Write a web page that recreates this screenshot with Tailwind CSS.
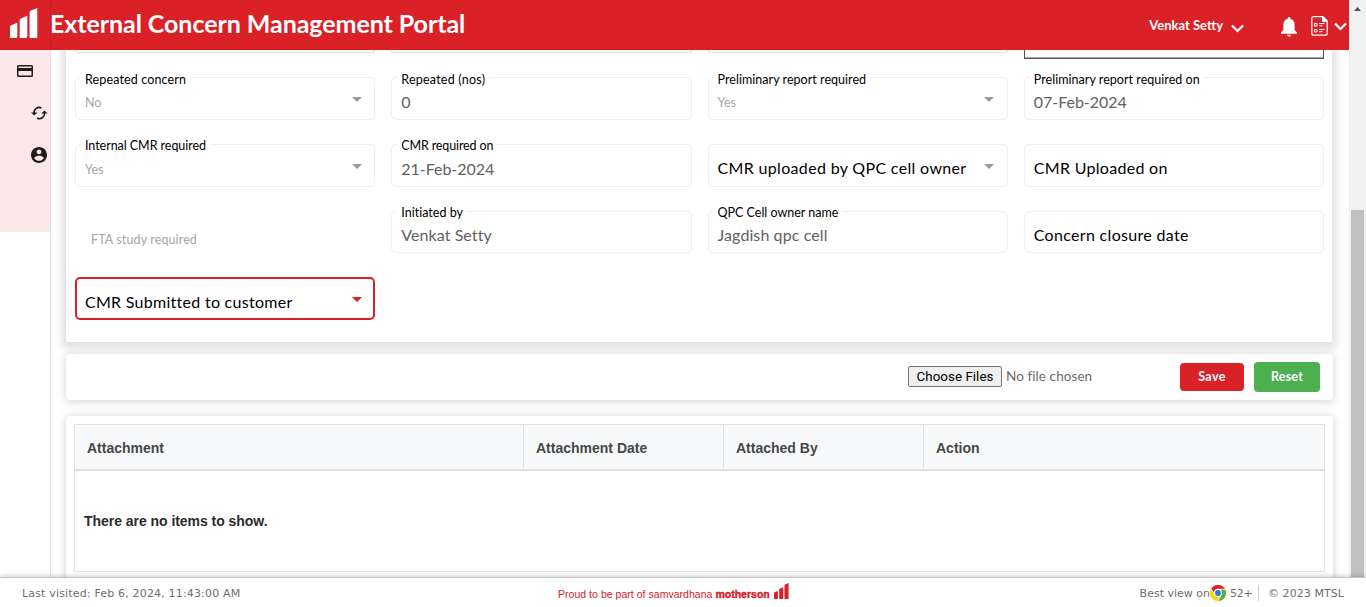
<!DOCTYPE html>
<html lang="en">
<head>
<meta charset="utf-8">
<title>External Concern Management Portal</title>
<script src="https://cdn.jsdelivr.net/npm/@tailwindcss/browser@4"></script>
</head>
<body class="flex h-[607px] flex-col overflow-hidden bg-white font-['Lato',sans-serif] text-black">
<div class="flex h-[577px] shrink-0 overflow-hidden">
  <div class="flex w-[1349px] flex-col">
    <header class="flex h-[50px] shrink-0 items-center bg-[#da2128] text-white">
      <div class="flex h-full w-[51px] shrink-0 items-center border-r border-b border-[#c41d24] pl-[10px]">
        <svg class="mt-[-3px] h-[30px] w-[28px]" viewBox="0 0 28 30" fill="#fff"><path d="M0 18.500Q0 17.800.8 17.400L7.300 14.800V28Q7.300 30 6 30H0ZM9.700 12.300Q9.700 11.400 10.500 10.800L17.300 7.800V28.500Q17 30 15.700 30H9.700ZM19.600 4.500Q19.600 3.500 20.500 2.800L27.300 0V30H19.600Z"/></svg>
      </div>
      <h1 class="-mt-[4px] -ml-px text-[25px] leading-[30px] font-bold tracking-[-0.06px]">External Concern Management Portal</h1>
      <div class="ml-auto flex items-center pr-[2px]">
        <span class="-mt-px text-[13px] leading-4 font-bold">Venkat Setty</span>
        <svg class="mt-[6px] ml-[8px] h-[9px] w-[13px]" viewBox="0 0 13 9" fill="none" stroke="#fff" stroke-width="2.200"><path d="M1 1.500 6.500 7 12 1.500"/></svg>
        <svg class="mt-[4px] ml-[37px] h-[20px] w-[16px]" viewBox="0 0 16 20" fill="#fff"><path d="M8 0C7.100 0 6.700.8 6.700 1.800 4 2.500 2.400 4.800 2.400 7.600V13L0 15.600V16.800H16V15.600L13.600 13V7.600C13.600 4.800 12 2.500 9.300 1.800 9.300.8 8.900 0 8 0ZM6 17.800H10Q9.800 19.700 8 19.700T6 17.800Z"/></svg>
        <svg class="mt-[2px] ml-[14px] h-[20px] w-[17px]" viewBox="0 0 17 20" fill="none" stroke="#fff"><path stroke-width="1.300" d="M2.500.7H11.800L16.200 5V17.500Q16.200 19.200 14.500 19.200H2.500Q.8 19.200.8 17.500V2.500Q.8.700 2.500.7Z"/><path fill="#fff" d="M11.500.7V5.300H16.200Z"/><path d="M3.500 7.500H6V10H3.500ZM3.500 13.500H6V16H3.500ZM8 7.500H13.500M8 9.700H11.500M8 13.500H13.500M8 15.700H11.500"/></svg>
        <svg class="mt-[2px] ml-[6px] h-[9px] w-[13px]" viewBox="0 0 13 9" fill="none" stroke="#fff" stroke-width="2.200"><path d="M1 1.500 6.500 7 12 1.500"/></svg>
      </div>
    </header>
    <div class="flex min-h-0 flex-1">
      <aside class="w-[51px] shrink-0 border-r border-[#e2e2e2]">
        <nav class="flex h-[182px] flex-col bg-[#fbe7e8] text-[#1f1c1b]">
          <svg class="mt-[15px] ml-[17px] h-[12px] w-[16px]" viewBox="0 0 16 12"><path fill="currentColor" fill-rule="evenodd" d="M1.500 0H14.500Q16 0 16 1.500V10.500Q16 12 14.500 12H1.500Q0 12 0 10.500V1.500Q0 0 1.500 0ZM1.500 1.500V3H14.500V1.500ZM1.500 6V10.600H14.500V6Z"/></svg>
          <svg class="mt-[29px] ml-[31px] h-[14px] w-[17px]" viewBox="0 0 17 14" fill="none" stroke="currentColor" stroke-width="1.600"><path d="M3.200 7.200A5 5 0 0 1 10.500 2M6 12A5 5 0 0 0 13.400 6.800"/><path fill="currentColor" stroke="none" d="M0 6.600H6.400L3.200 9.400ZM10.200 7.400H16.600L13.400 4.600Z"/></svg>
          <svg class="mt-[27px] ml-[31px] h-[16px] w-[16px]" viewBox="2 2 20 20" fill="currentColor"><path d="M12 2C6.480 2 2 6.480 2 12s4.480 10 10 10 10-4.480 10-10S17.520 2 12 2zm0 3c1.660 0 3 1.340 3 3s-1.340 3-3 3-3-1.340-3-3 1.340-3 3-3zm0 14.200c-2.500 0-4.710-1.280-6-3.220.030-1.990 4-3.080 6-3.080 1.990 0 5.970 1.090 6 3.080-1.290 1.940-3.500 3.220-6 3.220z"/></svg>
        </nav>
      </aside>
      <main class="flex min-w-0 flex-1 flex-col gap-y-[12px] overflow-hidden pr-[16px] pl-[15px]">
        <section class="mr-px h-[292px] shrink-0 bg-white pr-[8px] pl-[9px] shadow-[0_2px_8px_4px_rgba(0,0,0,0.13)]">
          <div class="grid grid-cols-4 grid-rows-[9px_43px_43px_42px_43px] gap-x-4 [&>div]:relative [&>div]:rounded-[5px] [&>div]:border [&>div]:border-[#efefef] [&>div]:pl-[9px]">
            <div class="mb-[6px] h-[3px] rounded-t-none! border-t-0! border-[#dedede]!"></div>
            <div class="mb-[6px] h-[3px] rounded-t-none! border-t-0! border-[#dedede]!"></div>
            <div class="mb-[6px] h-[3px] rounded-t-none! border-t-0! border-[#dedede]!"></div>
            <div class="h-[9px] rounded-none! border-t-0! border-[#555]! shadow-[inset_0_-1px_0_#aaa]"></div>

            <div class="mt-[18px] h-[43px]"><span class="absolute top-[-7px] left-[5px] bg-white px-1 text-[12.5px] leading-[17px] tracking-[0.13px]">Repeated concern</span><p class="pt-[17px] text-[12.500px] leading-4 text-[#a6a6a6]">No</p><svg class="absolute top-[19px] right-[12px] h-[5px] w-[10px]" viewBox="0 0 10 5" fill="#9b9b9b"><path d="M0 0H10L5 5Z"/></svg></div>
            <div class="mt-[18px] h-[43px]"><span class="absolute top-[-7px] left-[5px] bg-white px-1 text-[12.5px] leading-[17px] tracking-[0.229px]">Repeated (nos)</span><p class="pt-[14px] text-[16px] leading-5 text-[#616161]">0</p></div>
            <div class="mt-[18px] h-[43px]"><span class="absolute top-[-7px] left-[5px] bg-white px-1 text-[12.5px] leading-[17px] tracking-[0.039px]">Preliminary report required</span><p class="pt-[17px] text-[12.500px] leading-4 text-[#a6a6a6]">Yes</p><svg class="absolute top-[19px] right-[13px] h-[5px] w-[10px]" viewBox="0 0 10 5" fill="#9b9b9b"><path d="M0 0H10L5 5Z"/></svg></div>
            <div class="mt-[18px] h-[43px]"><span class="absolute top-[-7px] left-[5px] bg-white px-1 text-[12.5px] leading-[17px] tracking-[0.039px]">Preliminary report required on</span><p class="pt-[14px] text-[16px] leading-5 tracking-[-0.030px] text-[#616161]">07-Feb-2024</p></div>

            <div class="mt-[42px] h-[43px]"><span class="absolute top-[-8px] left-[5px] bg-white px-1 text-[12.5px] leading-[17px] tracking-[-0.047px]">Internal CMR required</span><p class="pt-[17px] text-[12.500px] leading-4 text-[#a6a6a6]">Yes</p><svg class="absolute top-[19px] right-[12px] h-[5px] w-[10px]" viewBox="0 0 10 5" fill="#9b9b9b"><path d="M0 0H10L5 5Z"/></svg></div>
            <div class="mt-[42px] h-[43px]"><span class="absolute top-[-8px] left-[5px] bg-white px-1 text-[12.5px] leading-[17px] tracking-[-0.134px]">CMR required on</span><p class="pt-[14px] text-[16px] leading-5 tracking-[-0.030px] text-[#616161]">21-Feb-2024</p></div>
            <div class="mt-[42px] h-[43px]"><p class="pt-[13px] text-[16px] leading-5 tracking-[0.332px]">CMR uploaded by QPC cell owner</p><svg class="absolute top-[19px] right-[13px] h-[5px] w-[10px]" viewBox="0 0 10 5" fill="#9b9b9b"><path d="M0 0H10L5 5Z"/></svg></div>
            <div class="mt-[42px] h-[43px]"><p class="pt-[13px] text-[16px] leading-5 tracking-[0.304px]">CMR Uploaded on</p></div>

            <div class="mt-[66px] h-[42px] border-transparent! pl-[15px]!"><p class="pt-[20px] text-[12.500px] leading-4 tracking-[0.123px] text-[#a6a6a6]">FTA study required</p></div>
            <div class="mt-[66px] h-[42px]"><span class="absolute top-[-8px] left-[5px] bg-white px-1 text-[12.5px] leading-[17px] tracking-[0.021px]">Initiated by</span><p class="pt-[13px] text-[16px] leading-5 tracking-[0.082px] text-[#616161]">Venkat Setty</p></div>
            <div class="mt-[66px] h-[42px]"><span class="absolute top-[-8px] left-[5px] bg-white px-1 text-[12.5px] leading-[17px]">QPC Cell owner name</span><p class="pt-[13px] text-[16px] leading-5 tracking-[0.093px] text-[#616161]">Jagdish qpc cell</p></div>
            <div class="mt-[66px] h-[42px]"><p class="pt-[13px] text-[16px] leading-5 tracking-[0.317px]">Concern closure date</p></div>

            <div class="mt-[90px] h-[43px] border-2! border-[#da2128]! pl-[8px]!"><p class="pt-[13px] text-[16px] leading-5 tracking-[0.279px]">CMR Submitted to customer</p><svg class="absolute top-[18px] right-[11px] h-[5px] w-[10px]" viewBox="0 0 10 5" fill="#da2128"><path d="M0 0H10L5 5Z"/></svg></div>
          </div>
        </section>

        <section class="flex h-[46px] shrink-0 items-center rounded-[4px] bg-white pr-[13px] shadow-[0_1px_8px_1px_rgba(0,0,0,0.16)]">
          <div class="ml-auto flex items-center">
            <button class="-mt-[2px] h-[21px] w-[94px] rounded-[2px] border border-[#767676] bg-[#efefef] font-['Roboto',sans-serif] text-[13.33px] leading-[19px] tracking-[0.06px]">Choose Files</button>
            <span class="-mt-[2px] ml-1 w-[174px] text-[13.5px] tracking-[0.081px] text-[#6b6b6b]">No file chosen</span>
            <button class="h-[28px] w-[64px] rounded-[4px] bg-[#da2128] text-[12.5px] font-bold tracking-[0.4px] text-white">Save</button>
            <button class="ml-[10px] h-[30px] w-[66px] rounded-[4px] bg-[#4caf50] text-[12.5px] font-bold tracking-[0.188px] text-white">Reset</button>
          </div>
        </section>

        <section class="mt-[4px] h-[190px] shrink-0 rounded-[4px] bg-white pt-[8px] pr-[8px] pl-[8px] font-['Liberation_Sans',sans-serif] text-[14px] font-bold shadow-[0_1px_8px_1px_rgba(0,0,0,0.16)]">
          <div class="h-[148px] border border-[#e2e2e2]">
            <div class="grid h-[46px] grid-cols-[449px_200px_200px_1fr] items-stretch border-b-2 border-[#e0e0e0] bg-[#f8f9fb] leading-[46px] text-[#464646] [&>div]:pl-[12px]">
              <div class="border-r border-[#e0e0e0]">Attachment</div>
              <div class="border-r border-[#e0e0e0]">Attachment Date</div>
              <div class="border-r border-[#e0e0e0]">Attached By</div>
              <div>Action</div>
            </div>
            <p class="pt-[40px] pl-[9px] leading-5 tracking-[-0.04px] text-[#2b2b2b]">There are no items to show.</p>
          </div>
        </section>
      </main>
    </div>
  </div>
  <div class="flex w-[17px] flex-col items-center bg-[#f1f1f1]">
    <svg class="mt-[7px] h-[4px] w-[7px]" viewBox="0 0 7 4" fill="#505050"><path d="M0 4H7L3.500 0Z"/></svg>
    <div class="mt-[199px] h-[367px] w-[13px] bg-[#c1c1c1]"></div>
  </div>
</div>
<footer class="relative flex h-[30px] shrink-0 items-center border-t border-[#c6c6c6] bg-white pt-px pr-[22px] pl-[22px] font-['DejaVu_Sans',sans-serif] text-[11px] text-[#6e6e6e] shadow-[0_-1px_5px_rgba(0,0,0,0.2)]">
  <span class="mt-[2px] w-[536px] tracking-[0.17px]">Last visited: Feb 6, 2024, 11:43:00 AM</span>
  <div class="flex items-center font-['Liberation_Sans',sans-serif] text-[10.5px] text-[#da2128]">
    <span class="mt-[3px] tracking-[0.03px]">Proud to be part of samvardhana</span>
    <span class="mt-[3px] ml-[3px] font-bold [-webkit-text-stroke:0.4px]">motherson</span>
    <svg class="-mt-[5px] ml-[4px] h-[16px] w-[15px]" viewBox="0 0 28 30" fill="#da2128"><path d="M0 18.500Q0 17.800.8 17.400L7.300 14.800V28Q7.300 30 6 30H0ZM9.700 12.300Q9.700 11.400 10.500 10.800L17.300 7.800V28.500Q17 30 15.700 30H9.700ZM19.600 4.500Q19.600 3.500 20.500 2.800L27.300 0V30H19.600Z"/></svg>
  </div>
  <div class="ml-auto flex items-center">
    <span class="mt-[2px]">Best view on</span>
    <svg class="h-[16px] w-[16px]" viewBox="0 0 16 16"><circle cx="8" cy="8" r="8" fill="#ffd400"/><path fill="#e0202b" d="M1.100 4A8 8 0 0 1 14.900 4L15 4.500H8L4.900 9.500Z"/><path fill="#4bae4f" d="M15.100 4.500A8 8 0 0 1 8 16L11.300 9.500 10.500 4.500Z"/><circle cx="8" cy="8" r="4.200" fill="#fff"/><circle cx="8" cy="8" r="2.900" fill="#2c7cc9"/><path d="M1.200 3.800 4.300 8.800M15.300 4.300H8M7.800 16 11 10.500" stroke="#fff" stroke-width=".8"/></svg>
    <span class="mt-[2px] ml-[4px] w-[28px] tracking-[-0.2px]">52+</span>
    <span class="h-[16px] border-l border-[#ccc] pt-px pl-[9px] leading-[16px] tracking-[0.063px]">© 2023 MTSL</span>
  </div>
</footer>
</body>
</html>
